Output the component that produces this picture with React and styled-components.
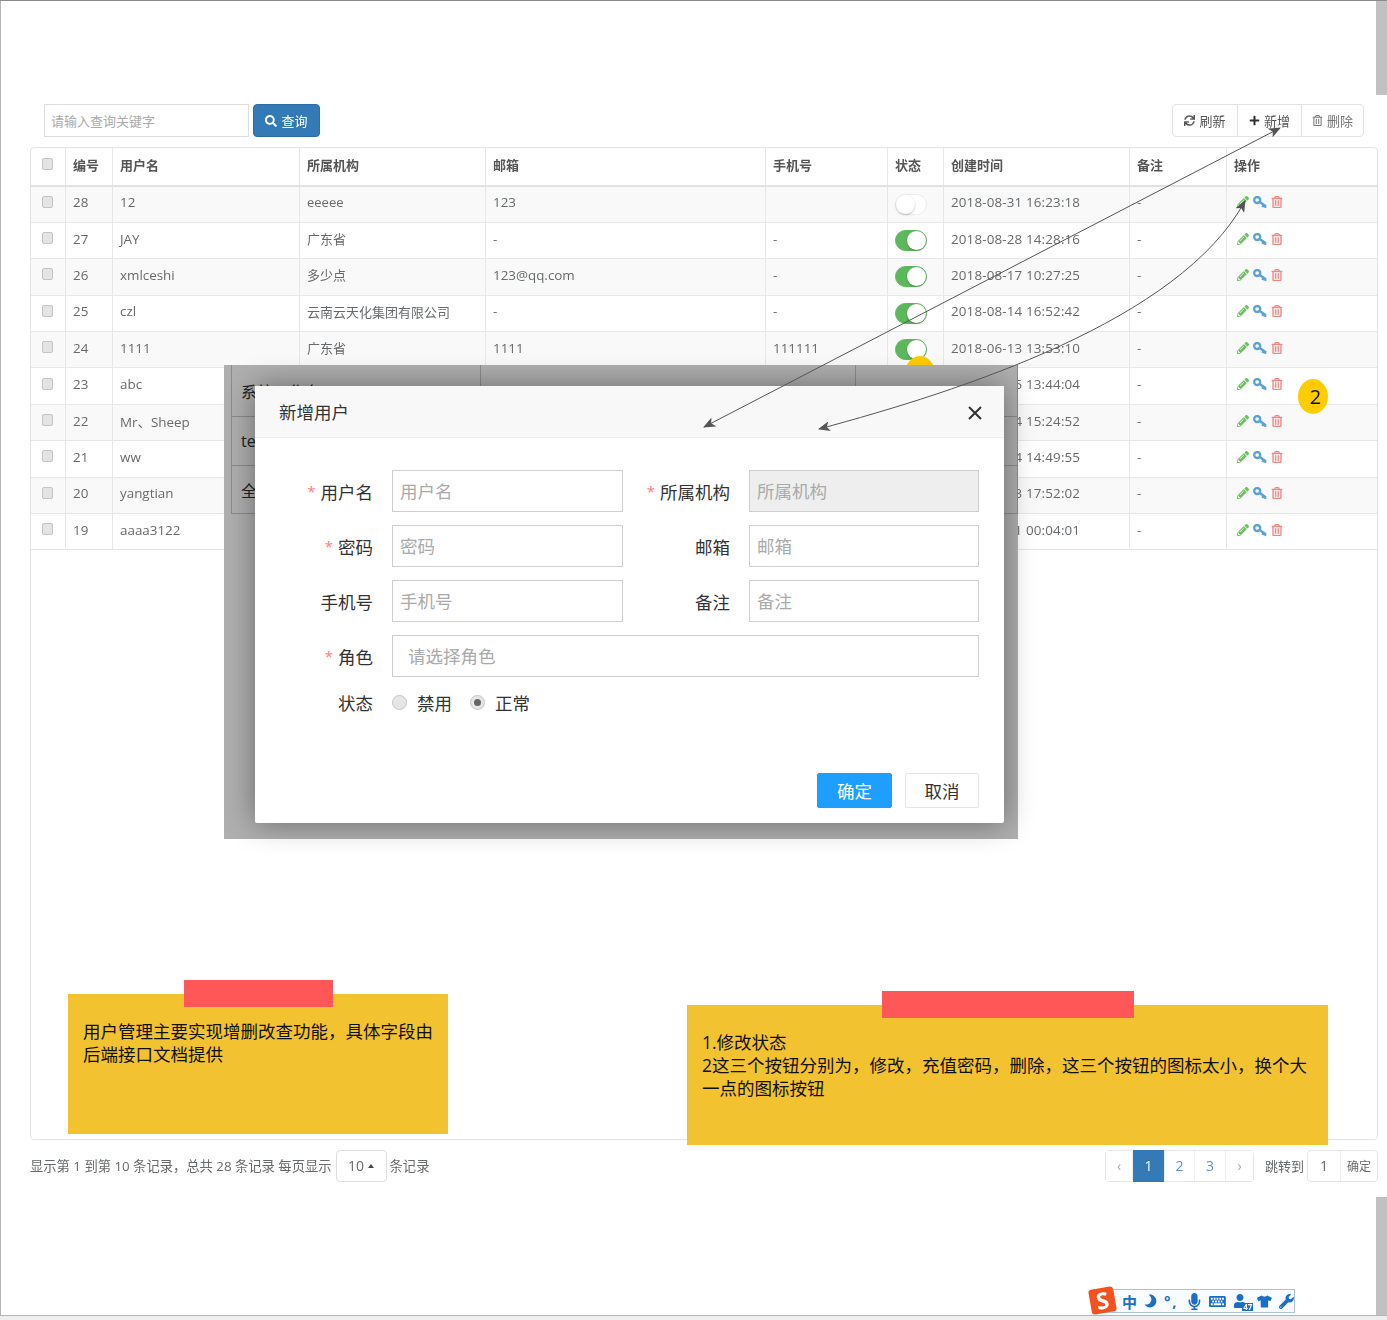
import React from "react";
import styled, { createGlobalStyle } from "styled-components";
import {
  FaSearch,
  FaSync,
  FaPlus,
  FaRegTrashAlt,
  FaPencilAlt,
  FaMoon,
  FaMicrophone,
  FaKeyboard,
  FaUser,
  FaTshirt,
  FaWrench,
} from "react-icons/fa";

const FONT = `"Open Sans", "Noto Sans CJK SC", sans-serif`;

const COLUMNS = [35, 47, 187, 186, 280, 122, 56, 186, 97, 152];
const HEADERS = ["编号", "用户名", "所属机构", "邮箱", "手机号", "状态", "创建时间", "备注", "操作"];

const USERS = [
  { id: 28, name: "12", org: "eeeee", mail: "123", phone: "", on: false, time: "2018-08-31 16:23:18" },
  { id: 27, name: "JAY", org: "广东省", mail: "-", phone: "-", on: true, time: "2018-08-28 14:28:16" },
  { id: 26, name: "xmlceshi", org: "多少点", mail: "123@qq.com", phone: "-", on: true, time: "2018-08-17 10:27:25" },
  { id: 25, name: "czl", org: "云南云天化集团有限公司", mail: "-", phone: "-", on: true, time: "2018-08-14 16:52:42" },
  { id: 24, name: "1111", org: "广东省", mail: "1111", phone: "111111", on: true, time: "2018-06-13 13:53:10" },
  { id: 23, name: "abc", org: "广东省", mail: "-", phone: "-", on: true, time: "2018-06-05 13:44:04" },
  { id: 22, name: "Mr、Sheep", org: "广东省", mail: "-", phone: "-", on: true, time: "2018-05-24 15:24:52" },
  { id: 21, name: "ww", org: "广东省", mail: "-", phone: "-", on: true, time: "2018-05-14 14:49:55" },
  { id: 20, name: "yangtian", org: "广东省", mail: "-", phone: "-", on: true, time: "2018-05-03 17:52:02" },
  { id: 19, name: "aaaa3122", org: "广东省", mail: "-", phone: "-", on: true, time: "2018-05-01 00:04:01" },
];

const GlobalStyle = createGlobalStyle`
  html, body {
    margin: 0;
    background: #fff;
  }
  * {
    box-sizing: border-box;
  }
`;

const Page = styled.div`
  position: relative;
  width: 1387px;
  height: 1320px;
  overflow: hidden;
  padding: 103px 9px 0 30px;
  background: #fff;
  border-top: 1px solid #8a8a8a;
  font-family: ${FONT};
  color: #676a6c;

  &::before {
    content: "";
    position: absolute;
    left: 0;
    top: 0;
    bottom: 0;
    width: 1px;
    background: #b5b5b5;
  }
`;

const Soft = styled.div`
  filter: blur(0.45px);
`;

const ToolbarRow = styled.div`
  display: flex;
  justify-content: space-between;
  height: 33px;
  margin-bottom: 10px;
  padding: 0 14px;
`;

const SearchGroup = styled.div`
  display: flex;
  gap: 4px;
`;

const SearchInput = styled.input`
  width: 205px;
  height: 33px;
  padding: 0 6px;
  border: 1px solid #dcdcdc;
  font: 13px ${FONT};
  outline: none;

  &::placeholder {
    color: #aaa;
  }
`;

const SearchButton = styled.button`
  display: flex;
  align-items: center;
  justify-content: center;
  gap: 4px;
  width: 67px;
  height: 33px;
  padding: 0;
  border: 1px solid #2e6da4;
  border-radius: 4px;
  background: #337ab7;
  color: #fff;
  font: 13px ${FONT};
`;

const ButtonGroup = styled.div`
  display: flex;
  border: 1px solid #e3e3e3;
  border-radius: 4px;
`;

const ToolButton = styled.div`
  display: flex;
  align-items: center;
  justify-content: center;
  gap: 4px;
  width: ${(p) => p.$w}px;
  font-size: 13px;
  color: ${(p) => p.$color || "#555"};

  & + & {
    border-left: 1px solid #e3e3e3;
  }
`;

const Card = styled.div`
  height: 993px;
  border: 1px solid #e3e3e3;
  border-radius: 4px;
  overflow: hidden;
`;

const Table = styled.table`
  width: 1348px;
  margin-left: -1px;
  table-layout: fixed;
  border-collapse: collapse;
  font-size: 13.4px;
`;

const Col = styled.col`
  width: ${(p) => p.$w}px;
`;

const Th = styled.th`
  height: 38px;
  padding: 0 7px 4px;
  border-left: 1px solid #e7e7e7;
  border-bottom: 2px solid #e2e2e2;
  text-align: left;
  font-size: 13px;
  font-weight: 700;
  color: #555;
`;

const Row = styled.tr`
  height: 36.4px;
  background: ${(p) => (p.$odd ? "#f9f9f9" : "#fff")};
`;

const Td = styled.td`
  padding: 0 7px 4px;
  border-left: 1px solid #e7e7e7;
  border-bottom: 1px solid #e7e7e7;
  white-space: nowrap;
`;

const OrgTd = styled(Td)`
  font-size: 13px;
`;

const TimeText = styled.span`
  letter-spacing: 0.15px;
`;

const Check = styled.span`
  display: block;
  width: 11px;
  height: 12px;
  margin: -1px 0 0 4px;
  border: 1px solid #c4c4c4;
  border-radius: 2px;
  background: #e4e4e4;
`;

const Toggle = styled.span`
  display: block;
  position: relative;
  width: 32px;
  height: 21px;
  margin: 4px 0 0;
  border-radius: 11px;
  background: ${(p) => (p.$on ? "#5cb85c" : "#fff")};
  border: 1px solid ${(p) => (p.$on ? "#5cb85c" : "#eaeaea")};

  &::after {
    content: "";
    position: absolute;
    top: 0;
    ${(p) => (p.$on ? "right: 0;" : "left: 0;")}
    width: 19px;
    height: 19px;
    border-radius: 50%;
    background: #fff;
    box-shadow: 0 1px 2px rgba(0, 0, 0, 0.25);
  }
`;

const Actions = styled.div`
  display: flex;
  align-items: center;
  gap: 4px;
  padding-left: 3px;
  font-size: 12px;
`;

const ActionIcon = styled.span`
  display: flex;
  color: ${(p) => p.$color};

  & svg {
    stroke: currentColor;
    stroke-width: ${(p) => p.$weight || 0}px;
  }
`;

const KeyIcon = styled.svg`
  width: 14px;
  height: 12px;
  fill: none;
  stroke: #5ba3d6;
  stroke-width: 2.4;
`;

const FooterRow = styled.div`
  display: flex;
  justify-content: space-between;
  align-items: center;
  height: 33px;
  margin-top: 9px;
  font-size: 13px;
`;

const FooterSide = styled.div`
  display: flex;
  align-items: center;
`;

const RecordText = styled.span`
  font-size: 13.3px;
`;

const PageSize = styled.div`
  display: flex;
  align-items: center;
  justify-content: center;
  gap: 4px;
  width: 51px;
  height: 32px;
  margin: 0 3px 0 4px;
  border: 1px solid #ddd;
  border-radius: 4px;
  font-size: 14px;
`;

const Caret = styled.span`
  width: 0;
  height: 0;
  border-left: 3px solid transparent;
  border-right: 3px solid transparent;
  border-bottom: 4px solid #444;
`;

const Pager = styled.div`
  display: flex;
  height: 32px;
  margin-right: 11px;
  border: 1px solid #e6e6e6;
  border-radius: 4px;
`;

const PagerItem = styled.div`
  display: flex;
  align-items: center;
  justify-content: center;
  width: ${(p) => p.$w}px;
  margin: ${(p) => (p.$active ? "-1px 0" : "0")};
  background: ${(p) => (p.$active ? "#337ab7" : "#fff")};
  color: ${(p) => (p.$active ? "#fff" : p.$dim ? "#aaa" : "#5f93c4")};
  font-size: 14px;

  & + & {
    border-left: 1px solid #eee;
  }
`;

const JumpGroup = styled.div`
  display: flex;
  height: 32px;
  margin-left: 3px;
  border: 1px solid #e6e6e6;
  border-radius: 4px;
`;

const JumpItem = styled.div`
  display: flex;
  align-items: center;
  justify-content: center;
  width: ${(p) => p.$w}px;
  font-size: ${(p) => p.$size}px;

  & + & {
    border-left: 1px solid #eee;
  }
`;

/* modal screenshot pasted over the table */
const Backdrop = styled.div`
  position: absolute;
  left: 224px;
  top: 364px;
  width: 794px;
  height: 474px;
  padding-left: 7px;
  background: #afafaf;
  color: #222;
  font-size: 16px;
  z-index: 2;
`;

const BackdropTable = styled.div`
  border-left: 1px solid #8c8c8c;
  border-right: 1px solid #8c8c8c;
`;

const BackdropRow = styled.div`
  display: flex;
  height: ${(p) => p.$h}px;
  border-bottom: 1px solid #8c8c8c;
`;

const BackdropCell = styled.div`
  display: flex;
  align-items: center;
  width: ${(p) => p.$w}px;
  padding-left: 9px;
  border-right: 1px solid #8c8c8c;
`;

const Modal = styled.div`
  position: absolute;
  left: 255px;
  top: 385px;
  display: flex;
  flex-direction: column;
  width: 749px;
  height: 437px;
  border-radius: 2px;
  background: #fff;
  box-shadow: 0 0 30px rgba(0, 0, 0, 0.4);
  color: #333;
  z-index: 3;
`;

const ModalHeader = styled.div`
  display: flex;
  align-items: center;
  justify-content: space-between;
  height: 52px;
  padding: 0 21px 0 24px;
  background: #f8f8f8;
  border-bottom: 1px solid #eee;
  font-size: 17.5px;
`;

const CloseIcon = styled.svg`
  width: 16px;
  height: 16px;
  margin-top: 2px;
  stroke: #333;
  stroke-width: 2;
`;

const FormGrid = styled.div`
  display: grid;
  grid-template-columns: 118px 231px 88px 230px;
  column-gap: 19px;
  row-gap: 13px;
  grid-auto-rows: 42px;
  padding-top: 32px;
`;

const Label = styled.label`
  display: flex;
  align-items: center;
  justify-content: flex-end;
  gap: 5px;
  font-size: 17.5px;
  white-space: nowrap;
`;

const Star = styled.span`
  color: #ff7a7a;
  font-size: 15px;
`;

const Field = styled.input`
  width: 100%;
  height: 42px;
  padding: 0 ${(p) => (p.$wide ? 15 : 7)}px;
  border: 1px solid #cfcfcf;
  background: ${(p) => (p.disabled ? "#eee" : "#fff")};
  font: 17.5px ${FONT};
  outline: none;
  grid-column: ${(p) => (p.$wide ? "2 / 5" : "auto")};

  &::placeholder {
    color: #aaa;
  }
`;

const RadioRow = styled.div`
  display: grid;
  grid-template-columns: 118px 1fr;
  column-gap: 19px;
  height: 36px;
  margin-top: 7px;
  align-items: center;
`;

const RadioGroup = styled.div`
  display: flex;
  align-items: center;
  font-size: 17.5px;
`;

const Radio = styled.span`
  display: flex;
  align-items: center;
  justify-content: center;
  width: 15px;
  height: 15px;
  margin-right: 10px;
  border: 1px solid #c4c4c4;
  border-radius: 50%;
  background: #e6e6e6;

  &::after {
    content: "";
    width: 7px;
    height: 7px;
    border-radius: 50%;
    background: ${(p) => (p.$checked ? "#666" : "transparent")};
  }
`;

const RadioText = styled.span`
  margin-right: 18px;
`;

const ModalFooter = styled.div`
  display: flex;
  justify-content: flex-end;
  gap: 13px;
  margin-top: auto;
  padding: 0 25px 15px 0;
`;

const ModalButton = styled.button`
  width: ${(p) => (p.$primary ? 75 : 74)}px;
  height: 35px;
  padding: 0;
  border: 1px solid ${(p) => (p.$primary ? "#1e9fff" : "#e6e6e6")};
  border-radius: 2px;
  background: ${(p) => (p.$primary ? "#1e9fff" : "#fff")};
  color: ${(p) => (p.$primary ? "#fff" : "#333")};
  font: 17.5px ${FONT};
`;

const Note = styled.div`
  position: absolute;
  left: ${(p) => p.$x}px;
  top: ${(p) => p.$y}px;
  width: ${(p) => p.$w}px;
  height: 140px;
  padding: ${(p) => p.$top}px 15px 0;
  background: #f2c230;
  color: #111;
  font-size: 17.5px;
  line-height: 23px;
  z-index: 1;
`;

const NoteTape = styled.div`
  position: absolute;
  left: ${(p) => p.$x}px;
  top: -14px;
  width: ${(p) => p.$w}px;
  height: 27px;
  background: #ff5757;
`;

const Badge = styled.div`
  position: absolute;
  left: ${(p) => p.$x}px;
  top: ${(p) => p.$y}px;
  display: flex;
  align-items: center;
  justify-content: center;
  width: 30px;
  height: 35px;
  padding-left: 5px;
  border-radius: 50%;
  background: #ffcc00;
  color: #111;
  font-size: 20px;
  z-index: 1;
`;

const ArrowLayer = styled.svg`
  position: absolute;
  left: 0;
  top: 0;
  z-index: 4;
  pointer-events: none;
`;

const Scrollbar = styled.div`
  position: absolute;
  right: 0;
  top: ${(p) => p.$top}px;
  width: 11px;
  height: ${(p) => p.$h}px;
  background: #c1c1c1;
`;

const BottomEdge = styled.div`
  position: absolute;
  left: 0;
  right: 0;
  bottom: 0;
  height: 5px;
  border-top: 1px solid #b5b5b5;
  background: #eee;
  z-index: 5;
`;

const ImeBar = styled.div`
  position: absolute;
  left: 1100px;
  top: 1288px;
  display: flex;
  align-items: center;
  gap: 7px;
  width: 195px;
  height: 24px;
  padding-left: 21px;
  border: 1px solid #a9c3dd;
  background: #f8fbff;
  color: #1a6fc4;
  font-size: 15px;
  z-index: 6;
`;

const ImeLogo = styled.div`
  position: absolute;
  left: 1090px;
  top: 1287px;
  display: flex;
  align-items: center;
  justify-content: center;
  width: 25px;
  height: 25px;
  border-radius: 3px;
  background: #f4511e;
  color: #fff;
  font-size: 23px;
  font-weight: 700;
  line-height: 1;
  transform: rotate(-10deg);
  z-index: 7;
`;

const ImeChar = styled.span`
  font-weight: 700;
  font-size: 15px;
  letter-spacing: ${(p) => p.$spread || 0}px;
`;

const ImeMoon = styled(FaMoon)`
  transform: rotate(225deg);
`;

const ImeUser = styled.span`
  position: relative;
  display: flex;
  margin-right: 3px;
`;

const ImeCount = styled.span`
  position: absolute;
  right: -6px;
  bottom: -3px;
  padding: 0 1px;
  background: #1a6fc4;
  color: #fff;
  font-size: 8px;
  font-weight: 700;
  line-height: 8px;
`;

function RowActions() {
  return (
    <Actions>
      <ActionIcon $color="#6cbf5f">
        <FaPencilAlt />
      </ActionIcon>
      <KeyIcon viewBox="0 0 14 12">
        <circle cx="4.2" cy="4" r="3" />
        <path d="M6.8 6 L13 10.5 M10.5 8.7 L9.5 11 M12.6 10.2 L11.8 11.8" />
      </KeyIcon>
      <ActionIcon $color="#ec8a84" $weight={14}>
        <FaRegTrashAlt />
      </ActionIcon>
    </Actions>
  );
}

function FormField({ label, required, ...rest }) {
  return (
    <>
      <Label>
        {required && <Star>*</Star>}
        {label}
      </Label>
      <Field placeholder={label} readOnly {...rest} />
    </>
  );
}

export default function App() {
  return (
    <>
      <GlobalStyle />
      <Page>
        <Soft>
          <ToolbarRow>
            <SearchGroup>
              <SearchInput placeholder="请输入查询关键字" readOnly />
              <SearchButton>
                <FaSearch size={12} />
                查询
              </SearchButton>
            </SearchGroup>
            <ButtonGroup>
              <ToolButton $w={64}>
                <FaSync size={11} />
                刷新
              </ToolButton>
              <ToolButton $w={64}>
                <FaPlus size={11} color="#333" />
                新增
              </ToolButton>
              <ToolButton $w={62} $color="#777">
                <FaRegTrashAlt size={11} />
                删除
              </ToolButton>
            </ButtonGroup>
          </ToolbarRow>

          <Card>
            <Table>
              <colgroup>
                {COLUMNS.map((w, i) => (
                  <Col key={i} $w={w} />
                ))}
              </colgroup>
              <thead>
                <tr>
                  <Th>
                    <Check />
                  </Th>
                  {HEADERS.map((h) => (
                    <Th key={h}>{h}</Th>
                  ))}
                </tr>
              </thead>
              <tbody>
                {USERS.map((u, i) => (
                  <Row key={u.id} $odd={i % 2 === 0}>
                    <Td>
                      <Check />
                    </Td>
                    <Td>{u.id}</Td>
                    <Td>{u.name}</Td>
                    <OrgTd>{u.org}</OrgTd>
                    <Td>{u.mail}</Td>
                    <Td>{u.phone}</Td>
                    <Td>
                      <Toggle $on={u.on} />
                    </Td>
                    <Td>
                      <TimeText>{u.time}</TimeText>
                    </Td>
                    <Td>-</Td>
                    <Td>
                      <RowActions />
                    </Td>
                  </Row>
                ))}
              </tbody>
            </Table>
          </Card>

          <FooterRow>
            <FooterSide>
              <RecordText>显示第 1 到第 10 条记录，总共 28 条记录 每页显示</RecordText>
              <PageSize>
                10 <Caret />
              </PageSize>
              <RecordText>条记录</RecordText>
            </FooterSide>
            <FooterSide>
              <Pager>
                <PagerItem $w={26} $dim>‹</PagerItem>
                <PagerItem $w={32} $active>1</PagerItem>
                <PagerItem $w={30}>2</PagerItem>
                <PagerItem $w={31}>3</PagerItem>
                <PagerItem $w={28} $dim>›</PagerItem>
              </Pager>
              跳转到
              <JumpGroup>
                <JumpItem $w={32} $size={14}>1</JumpItem>
                <JumpItem $w={37} $size={12}>确定</JumpItem>
              </JumpGroup>
            </FooterSide>
          </FooterRow>
        </Soft>

        <Badge $x={905} $y={355}>2</Badge>
        <Badge $x={1298} $y={378}>2</Badge>

        <Backdrop>
          <BackdropTable>
            <BackdropRow $h={52}>
              <BackdropCell $w={249}>系统工作台</BackdropCell>
              <BackdropCell $w={375} />
            </BackdropRow>
            <BackdropRow $h={49}>
              <BackdropCell $w={249}>test</BackdropCell>
            </BackdropRow>
            <BackdropRow $h={48}>
              <BackdropCell $w={249}>全部</BackdropCell>
            </BackdropRow>
          </BackdropTable>
        </Backdrop>

        <Modal>
          <ModalHeader>
            新增用户
            <CloseIcon viewBox="0 0 16 16">
              <path d="M2 2 L14 14 M14 2 L2 14" />
            </CloseIcon>
          </ModalHeader>
          <FormGrid>
            <FormField label="用户名" required />
            <FormField label="所属机构" required disabled />
            <FormField label="密码" required />
            <FormField label="邮箱" />
            <FormField label="手机号" />
            <FormField label="备注" />
            <Label>
              <Star>*</Star>
              角色
            </Label>
            <Field placeholder="请选择角色" readOnly $wide />
          </FormGrid>
          <RadioRow>
            <Label>状态</Label>
            <RadioGroup>
              <Radio />
              <RadioText>禁用</RadioText>
              <Radio $checked />
              <RadioText>正常</RadioText>
            </RadioGroup>
          </RadioRow>
          <ModalFooter>
            <ModalButton $primary>确定</ModalButton>
            <ModalButton>取消</ModalButton>
          </ModalFooter>
        </Modal>

        <Note $x={68} $y={993} $w={380} $top={26}>
          <NoteTape $x={116} $w={149} />
          用户管理主要实现增删改查功能，具体字段由后端接口文档提供
        </Note>
        <Note $x={687} $y={1004} $w={641} $top={26}>
          <NoteTape $x={195} $w={252} />
          1.修改状态
          <br />
          2这三个按钮分别为，修改，充值密码，删除，这三个按钮的图标太小，换个大一点的图标按钮
        </Note>

        <ArrowLayer width="1387" height="1320" viewBox="0 0 1387 1320" fill="none" stroke="#555">
          <defs>
            <marker
              id="head"
              viewBox="0 0 12 10"
              refX="11"
              refY="5"
              markerWidth="12"
              markerHeight="10"
              markerUnits="userSpaceOnUse"
              orient="auto-start-reverse"
            >
              <path d="M0 0 L12 5 L0 10 L3 5 Z" fill="#555" stroke="none" />
            </marker>
          </defs>
          <path d="M704 426 L1280 127" markerStart="url(#head)" markerEnd="url(#head)" />
          <path d="M819 428 C960 390 1180 320 1245 200" markerStart="url(#head)" markerEnd="url(#head)" />
        </ArrowLayer>

        <Scrollbar $top={-1} $h={95} />
        <Scrollbar $top={1196} $h={120} />
        <BottomEdge />

        <ImeLogo>S</ImeLogo>
        <ImeBar>
          <ImeChar>中</ImeChar>
          <ImeMoon size={13} />
          <ImeChar $spread={2}>°,</ImeChar>
          <FaMicrophone size={17} />
          <FaKeyboard size={17} />
          <ImeUser>
            <FaUser size={14} />
            <ImeCount>47</ImeCount>
          </ImeUser>
          <FaTshirt size={15} />
          <FaWrench size={15} />
        </ImeBar>
      </Page>
    </>
  );
}
